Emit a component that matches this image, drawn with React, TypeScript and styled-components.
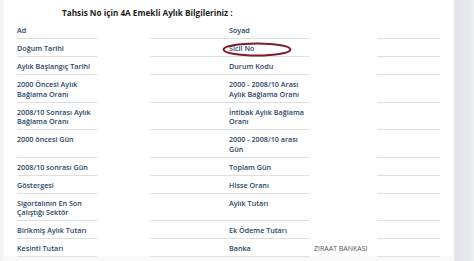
import React from "react";
import styled, { createGlobalStyle } from "styled-components";

const Global = createGlobalStyle`
  html, body {
    margin: 0;
    padding: 0;
    background: #eef0f3;
    font-family: "Open Sans", "Noto Sans", sans-serif;
    overflow: hidden;
  }
`;

const Page = styled.div`
  display: flex;
  width: 474px;
  height: 261px;
  background: linear-gradient(90deg, #f1f2f4 0, #f9f9fa 5px);
`;

const Card = styled.section`
  position: relative;
  margin-left: 4px;
  width: 448px;
  height: 256px;
  background: #fff;
  box-sizing: border-box;
  padding: 6px 0 0 13px;
`;

const Side = styled.aside`
  margin-left: 2px;
  width: 20px;
  height: 261px;
  background: linear-gradient(90deg, #e3e5e9 0, #e6e8ec 70%, #eef0f2 100%);
`;

const Title = styled.h2`
  margin: 0 0 1px 45px;
  font-size: 8.2px;
  line-height: 14px;
  font-weight: 700;
  color: #222;
`;

const Grid = styled.div`
  display: grid;
  grid-template-columns: 80px 132px 80px 131px;
`;

const Label = styled.div`
  font-size: 7.2px;
  font-weight: 600;
  color: #2a4564;
  line-height: 9.5px;
  padding: 5px 0 2.5px;
  border-bottom: 1px solid #dcdfe3;
`;

const Value = styled.div<{ $lineStart: number }>`
  font-size: 7px;
  color: #555;
  line-height: 9.5px;
  padding: 5px 0 3.5px 5px;
  background: linear-gradient(#dcdfe3, #dcdfe3) no-repeat;
  background-size: calc(100% - ${(p) => p.$lineStart}px) 1px;
  background-position: right bottom;
`;

const Mark = styled.svg`
  position: absolute;
  left: 218px;
  top: 42px;
  overflow: visible;
`;

type Row = [string, string, string, string];

const rows: Row[] = [
  ["Ad", "", "Soyad", ""],
  ["Doğum Tarihi", "", "Sicil No", ""],
  ["Aylık Başlangıç Tarihi", "", "Durum Kodu", ""],
  ["2000 Öncesi Aylık Bağlama Oranı", "", "2000 - 2008/10 Arası Aylık Bağlama Oranı", ""],
  ["2008/10 Sonrası Aylık Bağlama Oranı", "", "İntibak Aylık Bağlama Oranı", ""],
  ["2000 öncesi Gün", "", "2000 - 2008/10 arası Gün", ""],
  ["2008/10 sonrası Gün", "", "Toplam Gün", ""],
  ["Göstergesi", "", "Hisse Oranı", ""],
  ["Sigortalının En Son Çalıştığı Sektör", "", "Aylık Tutarı", ""],
  ["Birikmiş Aylık Tutarı", "", "Ek Ödeme Tutarı", ""],
  ["Kesinti Tutarı", "", "Banka", "ZIRAAT BANKASI"],
];

export default function App() {
  return (
    <>
      <Global />
      <Page>
        <Card>
          <Title>Tahsis No için 4A Emekli Aylık Bilgileriniz :</Title>
          <Grid>
            {rows.map(([l1, v1, l2, v2], i) => (
              <React.Fragment key={i}>
                <Label>{l1}</Label>
                <Value $lineStart={53}>{v1}</Value>
                <Label>{l2}</Label>
                <Value $lineStart={68}>{v2}</Value>
              </React.Fragment>
            ))}
          </Grid>
          <Mark width="70" height="15" viewBox="0 0 70 15">
            <ellipse cx="35" cy="7.5" rx="33.5" ry="6" fill="none" stroke="#7d1a2c" strokeWidth="2" />
          </Mark>
        </Card>
        <Side />
      </Page>
    </>
  );
}
